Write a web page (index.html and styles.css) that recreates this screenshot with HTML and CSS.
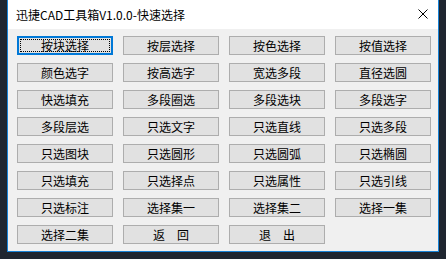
FILE: index.html
```html
<!DOCTYPE html>
<html lang="zh-CN">
<head>
    <meta charset="UTF-8">
    <title>迅捷CAD工具箱V1.0.0-快速选择</title>
    <link rel="stylesheet" href="styles.css">
</head>
<body>

    <div class="window">
        <!-- 标题栏 -->
        <div class="titlebar">
            <span class="title">迅捷CAD工具箱V1.0.0-快速选择</span>
            <svg class="close" width="10" height="10" viewBox="0 0 10 10">
                <path d="M0.5 0.5 L9.5 9.5 M9.5 0.5 L0.5 9.5" stroke="#000" stroke-width="1" fill="none"/>
            </svg>
        </div>

        <!-- 按钮区 -->
        <div class="panel">
            <button class="btn focused"><span>按块选择</span></button>
            <button class="btn">按层选择</button>
            <button class="btn">按色选择</button>
            <button class="btn">按值选择</button>

            <button class="btn">颜色选字</button>
            <button class="btn">按高选字</button>
            <button class="btn">宽选多段</button>
            <button class="btn">直径选圆</button>

            <button class="btn">快选填充</button>
            <button class="btn">多段圈选</button>
            <button class="btn">多段选块</button>
            <button class="btn">多段选字</button>

            <button class="btn">多段层选</button>
            <button class="btn">只选文字</button>
            <button class="btn">只选直线</button>
            <button class="btn">只选多段</button>

            <button class="btn">只选图块</button>
            <button class="btn">只选圆形</button>
            <button class="btn">只选圆弧</button>
            <button class="btn">只选椭圆</button>

            <button class="btn">只选填充</button>
            <button class="btn">只选择点</button>
            <button class="btn">只选属性</button>
            <button class="btn">只选引线</button>

            <button class="btn">只选标注</button>
            <button class="btn">选择集一</button>
            <button class="btn">选择集二</button>
            <button class="btn">选择一集</button>

            <button class="btn">选择二集</button>
            <button class="btn">返　回</button>
            <button class="btn">退　出</button>
        </div>
    </div>

</body>
</html>
```

FILE: styles.css
```css
body {
    margin: 0;
    background-color: #1f2630;
    font-family: "Noto Sans CJK SC", "Noto Sans", sans-serif;
    font-size: 12px;
    height: 259px;
    overflow: hidden;
}
.window {
    margin-left: 7px;
    width: 430px;
    height: 251px;
    border: 1px solid #1883d7;
    border-top: none;
    background-color: #f0f0f0;
}
.titlebar {
    height: 29px;
    background-color: #fff;
    display: flex;
    align-items: center;
    justify-content: space-between;
    padding: 0 10px 0 8px;
}
.title {
    color: #000;
    font-size: 12px;
    margin-top: -1px;
}
.close {
    display: block;
    margin-bottom: 1px;
}
.panel {
    display: grid;
    grid-template-columns: repeat(4, 96px);
    grid-auto-rows: 19px;
    column-gap: 10px;
    row-gap: 8px;
    padding: 7px 0 0 9px;
}
.btn {
    margin: 0;
    padding: 0;
    border: 1px solid #adadad;
    background-color: #e1e1e1;
    color: #000;
    font-family: inherit;
    font-size: 12px;
    line-height: 17px;
    white-space: pre;
}
.focused {
    border: 2px solid #0078d7;
    padding: 1px;
}
.focused span {
    display: block;
    height: 11px;
    line-height: 11px;
    border: 1px dotted #000;
    padding-top: 0;
}
```
